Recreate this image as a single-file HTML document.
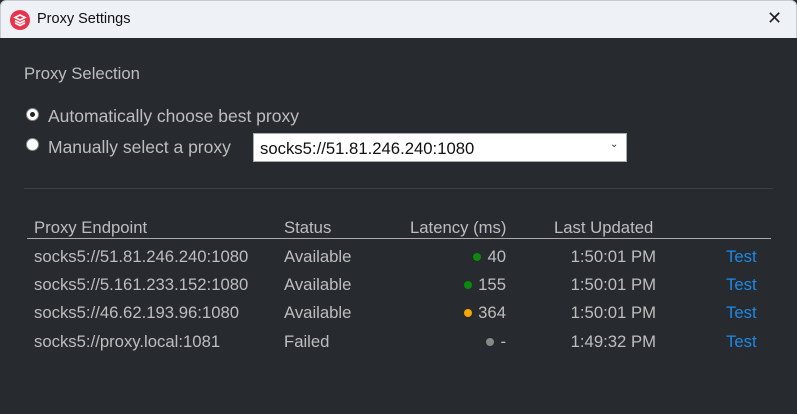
<!DOCTYPE html>
<html><head><style>
*{margin:0;padding:0;box-sizing:border-box}
body{width:797px;height:414px;background:#272b30;font-family:"Liberation Sans",sans-serif;position:relative;overflow:hidden;color:#bdbdbd}
.tb{position:absolute;left:0;top:0;width:797px;height:38px;background:#eef2f7;border:1px solid #c8ccd0;border-bottom:none;border-radius:6px 6px 0 0}
.t{position:absolute;white-space:nowrap;font-size:16.7px}
.r{text-align:right}
.dot{display:inline-block;width:8px;height:8px;border-radius:50%;margin-right:6px;vertical-align:1px}
.test{color:#1e88e5}
.radio{position:absolute;width:13px;height:13px;border-radius:50%;background:#fff;border:1px solid #888}
</style></head><body>
<div class="tb">
<svg style="position:absolute;left:9px;top:9px" width="20" height="20" viewBox="0 0 20 20"><circle cx="10" cy="10" r="10" fill="#e8344a"/><path d="M5 7.5l5-2.5 5 2.5-5 2.5z M5 10.5l5 2.5 5-2.5 M5 13l5 2.5 5-2.5" stroke="#fff" stroke-width="1.6" fill="none"/></svg>
<div class="t" style="left:36px;top:10px;font-size:14.5px;color:#111">Proxy Settings</div>
<div class="t" style="left:766px;top:7px;font-size:18px;color:#222">✕</div>
</div>
<div class="t" style="left:24px;top:64px">Proxy Selection</div>
<div class="radio" style="left:26px;top:108px"><div style="position:absolute;left:3px;top:3px;width:5px;height:5px;border-radius:50%;background:#222"></div></div>
<div class="t" style="left:48px;top:106px;font-size:17.5px">Automatically choose best proxy</div>
<div class="radio" style="left:26px;top:138px"></div>
<div class="t" style="left:48px;top:137px;font-size:17.5px">Manually select a proxy</div>
<div style="position:absolute;left:253px;top:133px;width:374px;height:29px;background:#fff;border:1px solid #aaa"></div>
<div class="t" style="left:260px;top:139px;color:#111">socks5://51.81.246.240:1080</div>
<div class="t" style="left:610px;top:139px;color:#333;font-size:10px">⌄</div>
<div style="position:absolute;left:24px;top:188px;width:749px;height:1px;background:#3c4148"></div>
<div class="t" style="left:34px;top:218px">Proxy Endpoint</div>
<div class="t" style="left:284px;top:218px">Status</div>
<div class="t" style="left:410px;top:218px">Latency (ms)</div>
<div class="t" style="left:554px;top:218px">Last Updated</div>
<div style="position:absolute;left:27px;top:238px;width:744px;height:1px;background:#aaa"></div>

<div class="t" style="left:34px;top:247px">socks5://51.81.246.240:1080</div>
<div class="t" style="left:284px;top:247px">Available</div>
<div class="t r" style="right:291px;top:247px"><span class="dot" style="background:#0b8a0b"></span>40</div>
<div class="t r" style="right:141px;top:247px">1:50:01 PM</div>
<div class="t test" style="left:726px;top:247px">Test</div>

<div class="t" style="left:34px;top:275px">socks5://5.161.233.152:1080</div>
<div class="t" style="left:284px;top:275px">Available</div>
<div class="t r" style="right:291px;top:275px"><span class="dot" style="background:#0b8a0b"></span>155</div>
<div class="t r" style="right:141px;top:275px">1:50:01 PM</div>
<div class="t test" style="left:726px;top:275px">Test</div>

<div class="t" style="left:34px;top:303px">socks5://46.62.193.96:1080</div>
<div class="t" style="left:284px;top:303px">Available</div>
<div class="t r" style="right:291px;top:303px"><span class="dot" style="background:#f5a800"></span>364</div>
<div class="t r" style="right:141px;top:303px">1:50:01 PM</div>
<div class="t test" style="left:726px;top:303px">Test</div>

<div class="t" style="left:34px;top:332px">socks5://proxy.local:1081</div>
<div class="t" style="left:284px;top:332px">Failed</div>
<div class="t r" style="right:291px;top:332px"><span class="dot" style="background:#888"></span>-</div>
<div class="t r" style="right:141px;top:332px">1:49:32 PM</div>
<div class="t test" style="left:726px;top:332px">Test</div>
</body></html>
